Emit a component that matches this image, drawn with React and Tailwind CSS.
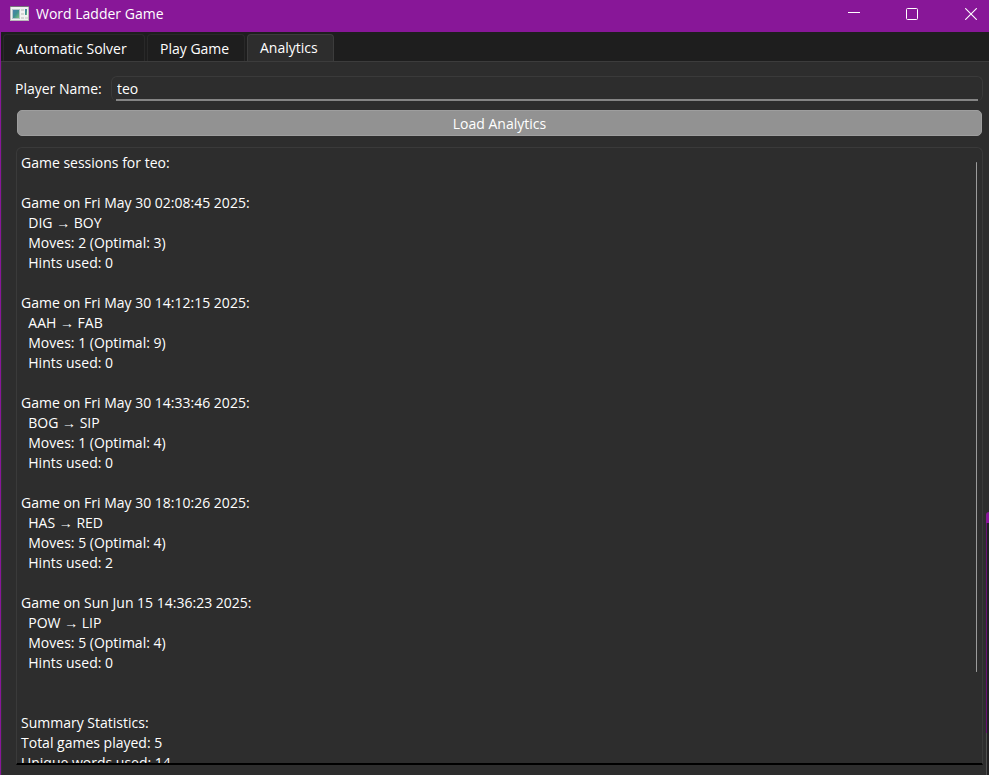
import { useState } from "react";

const sessions = [
  { date: "Fri May 30 02:08:45 2025", from: "DIG", to: "BOY", moves: 2, optimal: 3, hints: 0 },
  { date: "Fri May 30 14:12:15 2025", from: "AAH", to: "FAB", moves: 1, optimal: 9, hints: 0 },
  { date: "Fri May 30 14:33:46 2025", from: "BOG", to: "SIP", moves: 1, optimal: 4, hints: 0 },
  { date: "Fri May 30 18:10:26 2025", from: "HAS", to: "RED", moves: 5, optimal: 4, hints: 2 },
  { date: "Sun Jun 15 14:36:23 2025", from: "POW", to: "LIP", moves: 5, optimal: 4, hints: 0 },
];

const report = [
  "Game sessions for teo:",
  "",
  ...sessions.flatMap((s) => [
    `Game on ${s.date}:`,
    `  ${s.from} → ${s.to}`,
    `  Moves: ${s.moves} (Optimal: ${s.optimal})`,
    `  Hints used: ${s.hints}`,
    "",
  ]),
  "",
  "Summary Statistics:",
  "Total games played: 5",
  "Unique words used: 14",
].join("\n");

function AppIcon() {
  return (
    <svg width="20" height="16" viewBox="0 0 20 16" aria-hidden="true">
      <defs>
        <linearGradient id="screen" x1="0" y1="0" x2="1" y2="1">
          <stop offset="0" stopColor="#4a7fae" />
          <stop offset="0.5" stopColor="#3f8f92" />
          <stop offset="1" stopColor="#7cc07c" />
        </linearGradient>
      </defs>
      <rect x="0.5" y="0.5" width="18" height="14" fill="#f1f1f1" stroke="#b9b9b9" />
      <rect x="0" y="0" width="19" height="1" fill="#77727c" />
      <rect x="2" y="3" width="8" height="10" fill="#b8c6cc" />
      <rect x="3" y="4" width="6" height="8" fill="url(#screen)" />
      <rect x="11" y="3" width="3" height="2" fill="#d4d4d4" />
      <rect x="11" y="7" width="3" height="2" fill="#d4d4d4" />
      <rect x="11" y="11" width="3" height="2" fill="#d4d4d4" />
      <rect x="15" y="3" width="2" height="6" fill="url(#screen)" />
      <rect x="15" y="11" width="3" height="2" fill="#dadada" />
    </svg>
  );
}

function TitleBar() {
  return (
    <header className="flex h-8 shrink-0 items-start justify-between bg-[#881798] pl-[10px]">
      <div className="flex h-7 items-center gap-[6px]">
        <AppIcon />
        <h1>Word Ladder Game</h1>
      </div>
      <div className="flex h-7">
        <button aria-label="Minimize" className="flex w-[58px] items-center justify-center">
          <svg width="12" height="12" viewBox="0 0 12 12"><path d="M0 4.5H12" stroke="#fff" /></svg>
        </button>
        <button aria-label="Maximize" className="flex w-[58px] items-center justify-center">
          <svg width="12" height="12" viewBox="0 0 12 12"><rect x="0.5" y="0.5" width="11" height="11" rx="1" fill="none" stroke="#fff" /></svg>
        </button>
        <button aria-label="Close" className="flex w-[48px] items-center justify-center pl-3">
          <svg width="12" height="12" viewBox="0 0 12 12"><path d="M0.2 0.2L11.8 11.8M11.8 0.2L0.2 11.8" stroke="#fff" strokeWidth="1.1" /></svg>
        </button>
      </div>
    </header>
  );
}

export default function App() {
  const [name, setName] = useState("teo");
  return (
    <div className="relative flex h-screen flex-col overflow-hidden bg-[#2d2d2d] font-['Open_Sans','Noto_Sans',sans-serif] text-sm leading-5 text-white">
      <TitleBar />
      <div className="flex min-h-0 flex-1 flex-col border-l border-[#881798]">
        <div role="tablist" className="flex h-[30px] shrink-0 items-end gap-[2px] border-b border-[#3c3c3c] bg-[#1e1e1e] pl-[2px]">
          <button role="tab" aria-selected="false" className="h-[27px] w-[142px] rounded-t border border-b-0 border-[#292929] pt-[2px] pl-3 text-left">Automatic Solver</button>
          <button role="tab" aria-selected="false" className="h-[27px] w-[98px] rounded-t border border-b-0 border-[#292929] pt-[2px] pl-3 text-left">Play Game</button>
          <button role="tab" aria-selected="true" className="h-[27px] w-[87px] rounded-t border border-b-0 border-[#3c3c3c] bg-[#2d2d2d] pl-3 text-left">Analytics</button>
        </div>
        <main role="tabpanel" className="flex min-h-0 flex-1 flex-col border-l border-[#343434] pt-[14px] pr-[6px] pb-[10px] pl-[13px]">
          <div className="flex h-[25px] items-center">
            <label htmlFor="player" className="w-24 shrink-0">Player Name:</label>
            <div className="min-w-0 flex-1 rounded-md border border-b-0 border-[#3a3a3a] px-[4px]">
              <input
                id="player"
                value={name}
                onChange={(e) => setName(e.target.value)}
                className="block h-6 w-full border-b-2 border-[#858585] bg-transparent px-px outline-none"
              />
            </div>
          </div>
          <button className="mt-[9px] mr-px ml-[2px] h-[26px] shrink-0 rounded-[5px] border border-[#9e9e9e] bg-[#929292] pt-[2px]">Load Analytics</button>
          <div className="relative mt-[11px] ml-px flex min-h-0 flex-1 rounded-t-md border border-b-2 border-[#3a3a3a] border-b-black">
            <textarea
              readOnly
              aria-label="Game sessions"
              value={report}
              className="block w-full resize-none bg-transparent px-1 pt-[5px] outline-none [scrollbar-width:none]"
            />
            <div className="absolute top-[14px] right-[5px] h-[510px] w-px rounded-full bg-[#9b9b9b]" />
          </div>
        </main>
      </div>
      <div className="absolute top-[512px] right-0 bottom-0 flex w-[3px] flex-col">
        <div className="h-[11px] rounded-tl-full bg-[#881798]" />
        <div className="h-[210px] border-l border-[#6a1277] bg-[#222222]" />
        <div className="flex-1 border-l border-[#505050] bg-[#222222]" />
      </div>
    </div>
  );
}
